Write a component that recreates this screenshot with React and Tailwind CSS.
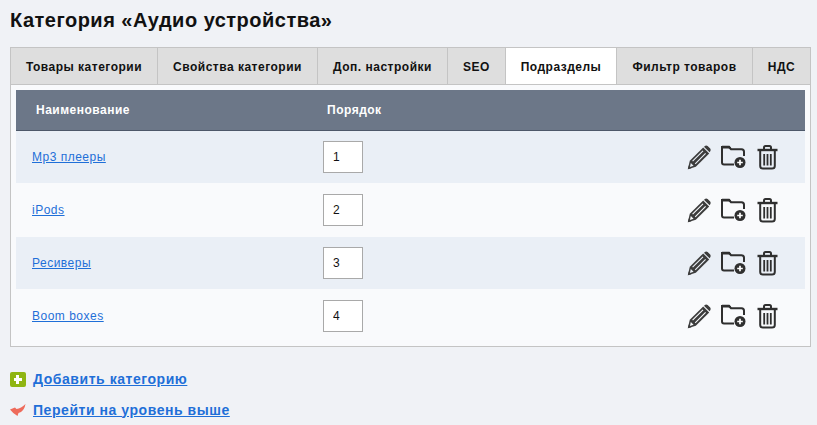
const tabs = [
  ["Товары категории", "w-[147px]"],
  ["Свойства категории", "w-[160px]"],
  ["Доп. настройки", "w-[130px]"],
  ["SEO", "w-[58px]"],
  ["Подразделы", "w-[111px]"],
  ["Фильтр товаров", "w-[136px]"],
  ["НДС", "flex-1"],
];
const rows = ["Mp3 плееры", "iPods", "Ресиверы", "Boom boxes"];

function Pencil({ bg }) {
  return (
    <svg width="24" height="25" viewBox="0 0 24 25" fill="none">
      <path d="M0.8 24.2 L2.8 15.8 L16.2 2.4 L22.2 8.4 L8.8 21.8 Z" fill="#3c3c3c" />
      <path d="M17.4 1.4 Q19 0 20.6 1 L23.2 3.6 Q24.2 5.2 23 6.8 L22.6 7.2 L16.9 1.8 Z" fill="#3c3c3c" />
      <path d="M5.2 15.8 L15.6 5.4 L16.4 6.2 L6 16.6 Z M7.8 18.4 L18.2 8 L19 8.8 L8.6 19.2 Z" fill={bg} />
      <path d="M3.8 18 L6.6 20.8 L2.9 22 Z" fill={bg} />
      <path d="M0.8 24.2 L1.8 20.6 L4.4 23.2 Z" fill="#3c3c3c" />
    </svg>
  );
}
function Folder() {
  return (
    <svg width="26" height="24" viewBox="0 0 26 24" fill="none">
      <path d="M13 19.5 H3 Q1 19.5 1 17.5 V2 H8 L10 4.2 H20.5 Q23 4.2 23 6.7 V11" stroke="#2f2f2f" strokeWidth="2" />
      <path d="M1 0.8 H8.5 L10.5 3.5 H1 Z" fill="#2f2f2f" />
      <circle cx="19" cy="17.5" r="5.5" fill="#2f2f2f" />
      <path d="M16.2 17.5 H21.8 M19 14.7 V20.3" stroke="#ffffff" strokeWidth="1.7" />
    </svg>
  );
}
function Trash() {
  return (
    <svg width="21" height="25" viewBox="0 0 21 25" fill="none">
      <path d="M0.5 5 H20.5" stroke="#2f2f2f" strokeWidth="2.4" />
      <path d="M7 4 V2.5 Q7 1 8.5 1 H12.5 Q14 1 14 2.5 V4" stroke="#2f2f2f" strokeWidth="2" />
      <path d="M3.2 6 V21 Q3.2 23.6 6 23.6 H15 Q17.8 23.6 17.8 21 V6" stroke="#2f2f2f" strokeWidth="2" />
      <path d="M7.2 9 V20.5 M10.5 9 V20.5 M13.8 9 V20.5" stroke="#2f2f2f" strokeWidth="1.8" />
    </svg>
  );
}

export default function App() {
  return (
    <div className="h-[425px] overflow-hidden bg-[#f0f2f6] pl-[10px] pr-[6px] font-['Liberation_Sans',Arial,sans-serif] text-[#111]">
      <h1 className="pt-[7px] h-[47px] text-[20px] leading-[26px] font-bold tracking-[0.48px]">Категория «Аудио устройства»</h1>
      <div className="h-[300px] border border-[#c4c4c4] bg-[#f9fafc]">
        <div className="flex h-[37px] border-b border-[#c4c4c4] bg-[#dedede]">
          {tabs.map(([t, w], i) => (
            <div
              key={t}
              className={`${w} flex items-center justify-center pt-[1px] text-[12px] font-bold tracking-[0.5px] ${i < 6 ? "border-r border-[#c4c4c4]" : ""} ${t === "Подразделы" ? "bg-white" : ""}`}
            >
              {t}
            </div>
          ))}
        </div>
        <div className="pt-[5px] px-[5px]">
          <div className="flex h-[41px] items-center border-b border-[#4d5869] bg-[#6c7788] text-[12px] font-bold tracking-[0.5px] text-white">
            <div className="w-[311px] pl-[20px]">Наименование</div>
            <div>Порядок</div>
          </div>
          {rows.map((r, i) => (
            <div key={r} className={`mb-[1px] flex h-[52px] items-center ${i % 2 === 0 ? "bg-[#eaeff6]" : "bg-[#f9fafc]"}`}>
              <a href="#" className="w-[307px] pl-[16px] text-[12px] tracking-[0.5px] text-[#1f6fd8] underline">{r}</a>
              <input
                readOnly
                value={i + 1}
                className="h-[32px] w-[40px] border border-[#a9a9a9] bg-white pl-[9px] text-[12px] text-[#111] outline-none"
              />
              <div className="ml-auto flex items-center gap-[10px] pr-[27px]">
                <Pencil bg={i % 2 === 0 ? "#eaeff6" : "#f9fafc"} />
                <Folder />
                <Trash />
              </div>
            </div>
          ))}
        </div>
      </div>
      <div className="pt-[22px] text-[14px] font-bold tracking-[0.55px] text-[#1f6fd8]">
        <div className="flex h-[20px] items-center gap-[7px]">
          <span className="relative h-[15px] w-[16px] rounded-[2px] bg-[#8fb512]">
            <span className="absolute left-[4px] top-[6px] h-[3px] w-[8px] bg-white" />
            <span className="absolute left-[6px] top-[3px] h-[9px] w-[3px] bg-white" />
          </span>
          <a href="#" className="underline">Добавить категорию</a>
        </div>
        <div className="mt-[11px] flex h-[20px] items-center gap-[7px]">
          <svg width="16" height="12" viewBox="0 0 16 12">
            <path d="M0 5.5 L5 3.5 L6.5 5 Q11 4.5 15.5 0 Q14.5 5.5 11 8 L8.5 9 L7.5 12 Q3 9.5 0 5.5 Z" fill="#ee6b5b" />
          </svg>
          <a href="#" className="underline">Перейти на уровень выше</a>
        </div>
      </div>
    </div>
  );
}
